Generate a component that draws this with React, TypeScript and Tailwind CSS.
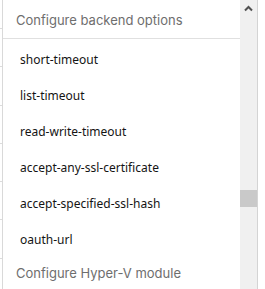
const items = [
  "short-timeout",
  "list-timeout",
  "read-write-timeout",
  "accept-any-ssl-certificate",
  "accept-specified-ssl-hash",
  "oauth-url",
];

const App = () => {
  return (
    <div className="flex h-[289px] w-[265px] overflow-hidden bg-white">
      {/* page behind the dropdown */}
      <div className="flex w-[2px] flex-col pt-[28px]">
        {[0, 1, 2, 3, 4, 5, 6].map((i) => (
          <div key={i} className="h-[38.3px] shrink-0 border-t border-[#dcdcdc]" />
        ))}
      </div>
      <div className="w-px bg-[#d9d9d9]" />
      <div className="flex w-[237px] flex-col font-['Noto_Sans',sans-serif]">
        <div className="flex h-[39px] shrink-0 items-center border-b border-[#e0e0e0] pl-[13px] pt-[4px] font-['Inter',sans-serif] text-[13px] text-[#6e6e6e]">
          Configure backend options
        </div>
        <div className="pt-[3px]">
          {items.map((item) => (
            <div key={item} className="flex h-9 items-center pl-[17px] text-[12px] text-[#141414]">
              {item}
            </div>
          ))}
        </div>
        <div className="flex h-[28px] items-center pl-[13px] pt-[4px] font-['Inter',sans-serif] text-[13px] text-[#6e6e6e]">
          Configure Hyper-V module
        </div>
      </div>
      <div className="relative w-[17px] bg-[#f0f0f0]">
        <svg className="absolute left-[4px] top-[5px]" width="9" height="7" viewBox="0 0 9 7">
          <path d="M1 5.5 L4.5 2 L8 5.5" stroke="#505050" strokeWidth="2" fill="none" />
        </svg>
        <div className="absolute left-0 top-[190px] h-[17px] w-[17px] bg-[#c9c9c9]" />
      </div>
      <div className="w-px bg-[#d4d4d4]" />
      <div className="flex-1" />
    </div>
  );
};

export default App;
